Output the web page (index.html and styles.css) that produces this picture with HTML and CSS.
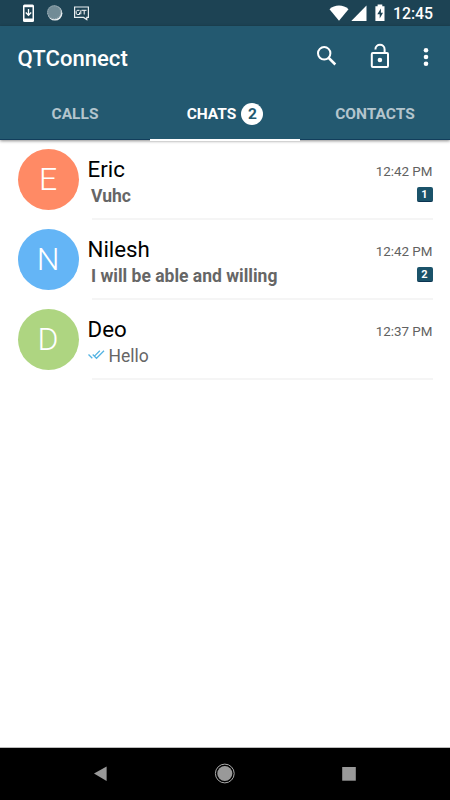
FILE: index.html
```html
<!DOCTYPE html>
<html lang="en">
<head>
<meta charset="utf-8">
<title>QTConnect</title>
<link rel="stylesheet" href="styles.css">
</head>
<body>
<div class="screen">
  <div class="status">
    <svg class="status-left" width="68" height="26" viewBox="0 0 68 26">
      <rect x="1" y="4.500" width="11" height="17.500" rx="1.500" fill="#fff"/>
      <path d="M2.500 7.200h8v11.300h-8z" fill="#1d4354"/>
      <path d="M6.500 9v6M3.800 12.500l2.700 2.800 2.700-2.800" fill="none" stroke="#fff" stroke-width="1.300"/>
      <circle cx="33" cy="13.200" r="7.400" fill="#e8edef"/>
      <circle cx="32.200" cy="12.300" r="7" fill="#718b96"/>
      <circle cx="32.200" cy="12.300" r="6.500" fill="none" stroke="#a6b6bd" stroke-width="1" stroke-dasharray="1 1"/>
      <path d="M52.600 7h13.800v10.400h-1.600v2.200l-3.200-2.200h-9z" fill="none" stroke="#e8eef0" stroke-width="1.200"/>
      <path d="M57.500 10.300h-2.300l-1 1.200v2.200l1 .8h2.300v-2M58.800 10.300v4M59.500 10.300h5M62.200 10.300v4.200" fill="none" stroke="#fff"/>
    </svg>
    <svg class="status-right" width="58" height="26" viewBox="0 0 58 26">
      <path d="M.5 9.200C5.500 4.300 14.500 4.300 19.500 9.200L10 20.700z" fill="#fff"/>
      <path d="M37.500 5.500V21H22.300z" fill="#fff"/>
      <path d="M46.400 6.300h2.200V4.500h4.700v1.800h2.200V21h-9.100z" fill="#fff"/>
      <path d="M51.900 8.500l-3.600 5.800h2.400v4.200l3.300-5.700h-2.100z" fill="#1d4354"/>
    </svg>
    <span class="clock">12:45</span>
  </div>
  <header class="header">
    <div class="toolbar">
      <h1 class="app-title">QTConnect</h1>
      <svg class="actions" width="120" height="30" viewBox="0 0 120 30">
        <g fill="none" stroke="#fff" stroke-width="2">
          <circle cx="9.200" cy="12.300" r="6.200"/>
          <path d="M13.800 17l6.500 6.500" stroke-width="2.500"/>
          <rect x="56.800" y="12" width="16.200" height="14" rx="1"/>
          <path d="M60.400 8.500C60.400 2.300 69.600 2.300 69.600 8.500V12"/>
        </g>
        <g fill="#fff"><circle cx="64.900" cy="19" r="2.300"/><circle cx="111" cy="9.200" r="2.300"/><circle cx="111" cy="16" r="2.300"/><circle cx="111" cy="22.800" r="2.300"/></g>
      </svg>
    </div>
    <nav class="tabs">
      <span class="tab">CALLS</span>
      <span class="tab active">CHATS<span class="count">2</span></span>
      <span class="tab">CONTACTS</span>
    </nav>
  </header>
  <main class="list">
    <article class="row">
      <span class="avatar orange">E</span>
      <div class="body">
        <div class="line"><span class="name">Eric</span><time class="time">12:42 PM</time></div>
        <div class="line second"><span class="message unread">Vuhc</span><span class="badge">1</span></div>
      </div>
    </article>
    <article class="row">
      <span class="avatar blue">N</span>
      <div class="body">
        <div class="line"><span class="name">Nilesh</span><time class="time">12:42 PM</time></div>
        <div class="line second"><span class="message unread">I will be able and willing</span><span class="badge">2</span></div>
      </div>
    </article>
    <article class="row">
      <span class="avatar green">D</span>
      <div class="body">
        <div class="line"><span class="name">Deo</span><time class="time">12:37 PM</time></div>
        <div class="line second"><span class="message"><svg class="ticks" width="17" height="12" viewBox="0 0 17 12"><path d="M.5 5.500L4.300 9.300M4.700 5.500L8.500 9.300L16 1.800M6 7.600L11.800 1.800" fill="none" stroke="#55b4e3" stroke-width="1.300"/></svg>Hello</span></div>
      </div>
    </article>
  </main>
  <footer class="navbar">
    <svg width="450" height="52" viewBox="0 0 450 52">
      <g fill="#999"><path d="M94 25.500L106.600 18.500v14.500z"/><circle cx="224.800" cy="25.500" r="7.500"/><rect x="342.200" y="19" width="13.600" height="13.700"/></g>
      <circle cx="224.800" cy="25.500" r="9.400" fill="none" stroke="#aaa" stroke-width="1"/>
    </svg>
  </footer>
</div>
</body>
</html>
```
FILE: styles.css
```css
* { box-sizing: border-box; }
body { margin: 0; font-family: Roboto, sans-serif; background: #fff; }
.screen { width: 450px; height: 800px; display: flex; flex-direction: column; overflow: hidden; }
svg { display: block; flex: none; }
.status { height: 26px; background: #1d4354; display: flex; padding: 0 17px 0 22px; color: #fff; }
.status-right { margin-left: auto; }
.clock { width: 46px; padding-left: 6px; font-size: 15.800px; line-height: 28px; font-weight: 500; white-space: nowrap; }
.header { height: 114px; background: #235970; box-shadow: 0 1px 3px rgba(0,0,0,.45); border-bottom: 1px solid #123e5c; }
.toolbar { height: 63px; display: flex; justify-content: space-between; padding: 0 15px 0 17.500px; }
.app-title { margin: 0; color: #fff; font-size: 22.100px; line-height: 64px; font-weight: 500; }
.actions { margin-top: 15px; }
.tabs { height: 51px; display: grid; grid-template-columns: repeat(3, 150px); }
.tab { display: flex; align-items: center; justify-content: center; font-size: 15.500px; font-weight: 700; color: #b4c5cd; border-bottom: 2px solid transparent; }
.active { color: #fff; border-color: #fff; margin-bottom: -1px; padding-bottom: 1px; }
.count { width: 22px; height: 22px; margin-left: 5px; border-radius: 50%; background: #fff; color: #235970; text-align: center; line-height: 23px; }
.list { flex: 1; }
.row { height: 80px; display: flex; padding: 0 17.500px; }
.avatar { flex: none; width: 61px; height: 61px; margin-top: 9px; border-radius: 50%; text-align: center; color: #fff; font-size: 32px; line-height: 61px; font-weight: 300; }
.orange { background: #ff8a65; }
.blue { background: #64b5f6; }
.green { background: #aed581; }
.body { flex: 1; padding-top: 15px; margin-left: 9px; background: linear-gradient(#f5f5f5, #f5f5f5) 4px 78px / 100% 2px no-repeat; }
.line { display: flex; justify-content: space-between; align-items: center; height: 28px; }
.second { height: 26px; }
.name { font-size: 22.300px; color: #000; }
.time { font-size: 13.400px; color: #616161; padding-top: 4px; }
.message { display: flex; align-items: center; font-size: 17.500px; color: #666; }
.unread { font-weight: 700; padding-left: 3.500px; }
.ticks { margin: 0 4px 2px 0; }
.badge { width: 16px; height: 15px; margin-bottom: 3px; border-radius: 2px; background: #1b536a; border-bottom: 1px solid #0b3350; color: #fff; font-size: 11px; line-height: 16px; font-weight: 700; text-align: center; }
.navbar { height: 53px; background: #000; border-top: 1px solid #bbb; }
```
